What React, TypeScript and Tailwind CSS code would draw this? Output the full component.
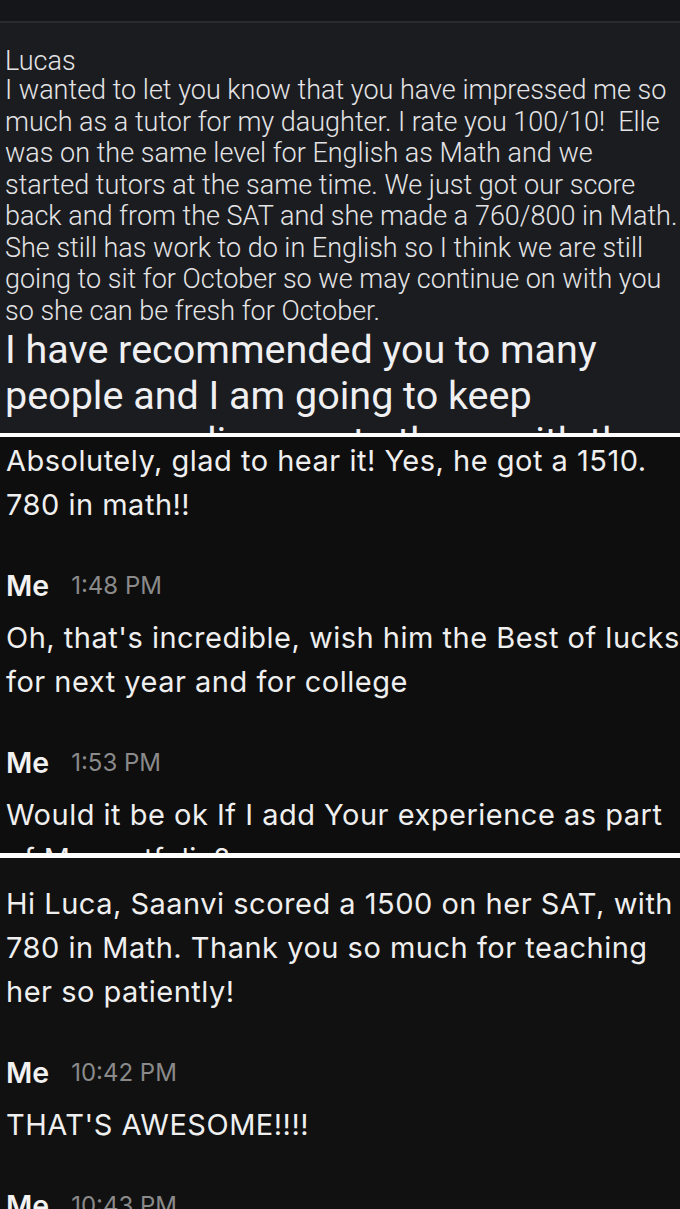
const ROBOTO = { fontFamily: "Roboto, 'Liberation Sans', sans-serif" };
const INTER = { fontFamily: "Inter, 'Liberation Sans', sans-serif" };

function NameRow({ time }: { time: string }) {
  return (
    <div className="mt-[39px] mb-[10px] flex h-[40px] items-center gap-[22px] pl-[6px]">
      <span className="text-[28.5px] font-semibold text-[#f2f2f2]">Me</span>
      <span className="text-[24px] text-[#8a8a8a]">{time}</span>
    </div>
  );
}

function Msg({ children }: { children: React.ReactNode }) {
  return (
    <p className="whitespace-nowrap pl-[6px] text-[29px] leading-[44px] tracking-[0.5px] text-[#efefef]">
      {children}
    </p>
  );
}

export default function App() {
  return (
    <div className="flex w-[680px] flex-col bg-black" style={ROBOTO}>
      {/* first screenshot: email */}
      <section className="flex h-[433px] flex-col overflow-hidden bg-[#1b1c20]">
        <div className="h-[21px] shrink-0 bg-[#15161a]" />
        <div className="h-[2px] shrink-0 bg-[#2a2b2f]" />
        <div className="px-[5px] pt-[24px] font-light text-[#e4e4e6]">
          <p className="text-[27px] leading-[28px]">Lucas</p>
          <div className="whitespace-nowrap text-[27px] leading-[31.5px]">
            <p>I wanted to let you know that you have impressed me so</p>
            <p>much as a tutor for my daughter. I rate you 100/10!&nbsp; Elle</p>
            <p>was on the same level for English as Math and we</p>
            <p>started tutors at the same time. We just got our score</p>
            <p>back and from the SAT and she made a 760/800 in Math.</p>
            <p>She still has work to do in English so I think we are still</p>
            <p>going to sit for October so we may continue on with you</p>
            <p>so she can be fresh for October.</p>
          </div>
          <div className="whitespace-nowrap text-[39.5px] font-normal leading-[46px] text-[#f0f0f2]">
            <p>I have recommended you to many</p>
            <p>people and I am going to keep</p>
            <p>recommending you to those with the same</p>
          </div>
        </div>
      </section>
      <div className="h-[4px] bg-white" />

      {/* second screenshot */}
      <section className="h-[416px] overflow-hidden bg-[#0e0e0e] pt-[2px]" style={INTER}>
        <Msg>Absolutely, glad to hear it! Yes, he got a 1510.</Msg>
        <Msg>780 in math!!</Msg>
        <NameRow time="1:48 PM" />
        <Msg>Oh, that's incredible, wish him the Best of lucks</Msg>
        <Msg>for next year and for college</Msg>
        <NameRow time="1:53 PM" />
        <Msg>Would it be ok If I add Your experience as part</Msg>
        <Msg>of My portfolio?</Msg>
      </section>
      <div className="h-[5px] bg-white" />

      {/* third screenshot */}
      <section className="h-[351px] overflow-hidden bg-[#111111] pt-[24px]" style={INTER}>
        <Msg>Hi Luca, Saanvi scored a 1500 on her SAT, with</Msg>
        <Msg>780 in Math. Thank you so much for teaching</Msg>
        <Msg>her so patiently!</Msg>
        <NameRow time="10:42 PM" />
        <Msg>THAT'S AWESOME!!!!</Msg>
        <NameRow time="10:43 PM" />
      </section>
    </div>
  );
}
